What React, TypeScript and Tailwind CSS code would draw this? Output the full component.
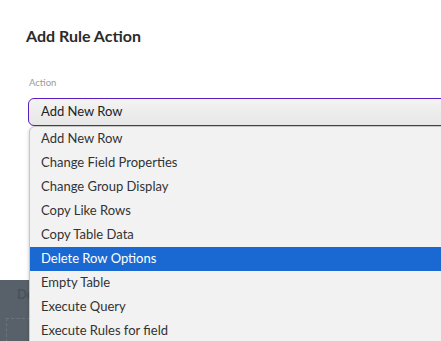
import { useState } from "react"

const ACTIONS = [
  "Add New Row",
  "Change Field Properties",
  "Change Group Display",
  "Copy Like Rows",
  "Copy Table Data",
  "Delete Row Options",
  "Empty Table",
  "Execute Query",
  "Execute Rules for field",
]

const FONT = { fontFamily: "Lato, 'Open Sans', sans-serif" }

export default function App() {
  const [active, setActive] = useState("Delete Row Options")

  return (
    <div
      className="relative flex h-[341px] w-[441px] flex-col overflow-hidden bg-[#58616a]"
      style={FONT}
    >
      {/* modal body */}
      <div className="h-[280px] shrink-0 bg-white pt-[26px] pl-[26px]">
        <h2 className="text-[16px] leading-5 font-bold text-[#2b2b2b]">
          Add Rule Action
        </h2>
        <div className="mt-[31px] pl-[3px] text-[9.5px] leading-3 text-[#9a9a9a]">
          Action
        </div>
        <div className="relative mt-[9px] ml-[2px]">
          <div className="flex h-[28px] w-[460px] items-center rounded-l-[6px] border-[1.5px] border-[#5a1ec2] bg-gradient-to-b from-[#f3f3f3] to-[#e7e7e7] pl-[12px] text-[13px] text-[#222]">
            Add New Row
          </div>

          {/* open menu */}
          <ul className="absolute top-[28px] left-[1px] z-10 w-[460px] overflow-hidden rounded-tl-[6px] border border-[#c6c6c6] bg-[#f2f2f2] shadow-[-1px_1px_3px_rgba(0,0,0,0.12)]">
            {ACTIONS.map((label) => (
              <li
                key={label}
                onMouseEnter={() => setActive(label)}
                className={
                  label === active
                    ? "flex h-6 items-center bg-[#1a69d2] pl-[11px] text-[13px] text-white"
                    : "flex h-6 items-center pl-[11px] text-[13px] text-[#333]"
                }
              >
                {label}
              </li>
            ))}
          </ul>
        </div>
      </div>

      {/* page behind the modal */}
      <div className="flex flex-col pl-[17px]">
        <span className="mt-[4px] text-[13px] leading-5 font-bold text-[#4a5159]">
          De
        </span>
        <div className="mt-[14px] ml-[-11px] flex h-[40px] w-[40px] border-t border-l border-dashed border-[#6c757e]" />
      </div>
    </div>
  )
}
